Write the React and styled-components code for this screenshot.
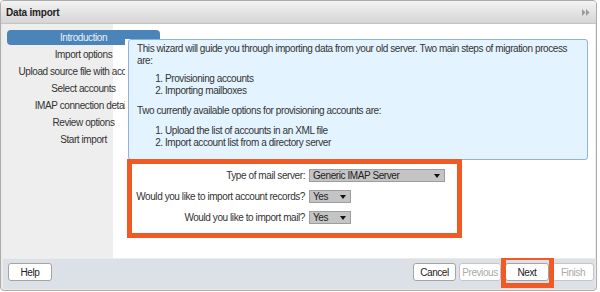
import React from "react";
import styled, { createGlobalStyle } from "styled-components";

const GlobalStyle = createGlobalStyle`
  *, *::before, *::after {
    box-sizing: border-box;
  }
  html, body {
    margin: 0;
    padding: 0;
    background: #ffffff;
    font-family: "Liberation Sans", Arial, sans-serif;
    font-size: 10px;
    letter-spacing: -0.42px;
    color: #333;
  }
`;

const Window = styled.div`
  width: 597px;
  height: 291px;
  border: 1px solid #acacac;
  border-radius: 4px;
  background: #ebebeb;
  display: flex;
  flex-direction: column;
  overflow: hidden;
`;

const TitleBar = styled.div`
  height: 23px;
  flex-shrink: 0;
  border-bottom: 1px solid #c4c4c4;
  background: linear-gradient(#f3f3f3, #d5d5d5);
  display: flex;
  align-items: center;
  justify-content: space-between;
  padding: 1px 6px 0 5px;
`;

const Title = styled.span`
  font-weight: bold;
  color: #222;
  letter-spacing: -0.2px;
`;

const Frame = styled.div`
  flex: 1;
  display: flex;
  flex-direction: column;
  padding: 0 1px 1px 2px;
`;

const Body = styled.div`
  height: 234px;
  flex-shrink: 0;
  display: flex;
  background: #fff;
`;

const Sidebar = styled.nav`
  width: 110px;
  flex-shrink: 0;
  background: #eeeeee;
  padding: 5px 0 0 4px;
`;

const StepItem = styled.div`
  width: 153px;
  height: 17px;
  display: flex;
  white-space: nowrap;
`;

const StepLabel = styled.div`
  flex: 1;
  margin: 1px 0;
  display: flex;
  align-items: center;
  justify-content: center;
  border-radius: 4px;
  background: ${(p) => (p.$active ? "#4a84b9" : "transparent")};
  color: ${(p) => (p.$active ? "#e9f0f7" : "#333")};
`;

const Content = styled.main`
  position: relative;
  z-index: 1;
  flex: 1;
  margin: 15px 0 0 12px;
  padding: 0 7px 0 3px;
  background: #fff;
`;

const InfoBox = styled.div`
  background: #e3f3ff;
  border: 1px solid #8db2e6;
  border-radius: 3px;
  padding: 3px 8px 10px 8px;
  line-height: 12px;
  color: #333;
`;

const Para = styled.p`
  margin: 0 0 ${(p) => p.$gap || 6}px;
`;

const List = styled.ol`
  margin: 0 0 ${(p) => p.$gap ?? 8}px;
  padding-left: 28px;
`;

const HighlightForm = styled.div`
  width: 335px;
  margin: -1px 0 0 -1px;
  border: 5px solid #f05a25;
  padding: 1px 0 5px 0;
`;

const FieldRow = styled.div`
  height: 21px;
  display: grid;
  grid-template-columns: 173px auto;
  column-gap: 4px;
  align-items: center;
`;

const FieldLabel = styled.label`
  text-align: right;
  white-space: nowrap;
  color: #333;
`;

const SelectBox = styled.div`
  width: ${(p) => p.$width}px;
  height: 13px;
  background: #c4c4c4;
  border: 1px solid #9d9d9d;
  display: flex;
  align-items: center;
  justify-content: space-between;
  padding: 0 4px 0 3px;
  color: #222;
  line-height: 11px;
`;

const Caret = styled.span`
  width: 0;
  height: 0;
  border-left: 3.5px solid transparent;
  border-right: 3.5px solid transparent;
  border-top: 4px solid #111;
`;

const Footer = styled.footer`
  height: 30px;
  flex-shrink: 0;
  margin-top: 1px;
  background: #dce0e7;
  display: flex;
  align-items: flex-start;
  justify-content: space-between;
  padding: 4px 1px 0 5px;
`;

const ButtonGroup = styled.div`
  display: flex;
  gap: 3px;
`;

const Button = styled.button`
  width: ${(p) => p.$width || 44}px;
  height: 18px;
  padding: 0;
  background: #fff;
  border: 1px solid ${(p) => (p.disabled ? "#c6c6c6" : "#a4a4a4")};
  border-radius: 3px;
  font-family: inherit;
  font-size: 10px;
  letter-spacing: inherit;
  color: ${(p) => (p.disabled ? "#aaaaaa" : "#222")};
`;

const Highlight = styled.div`
  position: relative;
  margin-left: 1px;

  &::after {
    content: "";
    position: absolute;
    left: -4px;
    right: -5px;
    top: -8px;
    bottom: -7px;
    border: 5px solid #f05a25;
    pointer-events: none;
  }
`;

const steps = [
  "Introduction",
  "Import options",
  "Upload source file with accounts",
  "Select accounts",
  "IMAP connection details",
  "Review options",
  "Start import",
];

function CollapseIcon() {
  return (
    <svg width="8" height="7" viewBox="0 0 8 7">
      <path d="M0 0 L3.5 3.5 L0 7 Z" fill="#9a9a9a" />
      <path d="M4 0 L7.5 3.5 L4 7 Z" fill="#9a9a9a" />
    </svg>
  );
}

function Select({ value, width }) {
  return (
    <SelectBox $width={width}>
      <span>{value}</span>
      <Caret />
    </SelectBox>
  );
}

export default function App() {
  return (
    <>
      <GlobalStyle />
      <Window>
        <TitleBar>
          <Title>Data import</Title>
          <CollapseIcon />
        </TitleBar>
        <Frame>
          <Body>
            <Sidebar>
              {steps.map((s, i) => (
                <StepItem key={s}>
                  <StepLabel $active={i === 0}>{s}</StepLabel>
                </StepItem>
              ))}
            </Sidebar>
            <Content>
              <InfoBox>
                <Para>
                  This wizard will guide you through importing data from your old
                  server. Two main steps of migration process are:
                </Para>
                <List>
                  <li>Provisioning accounts</li>
                  <li>Importing mailboxes</li>
                </List>
                <Para $gap={8}>
                  Two currently available options for provisioning accounts are:
                </Para>
                <List $gap={0}>
                  <li>Upload the list of accounts in an XML file</li>
                  <li>Import account list from a directory server</li>
                </List>
              </InfoBox>
              <HighlightForm>
                <FieldRow>
                  <FieldLabel>Type of mail server:</FieldLabel>
                  <Select value="Generic IMAP Server" width={136} />
                </FieldRow>
                <FieldRow>
                  <FieldLabel>Would you like to import account records?</FieldLabel>
                  <Select value="Yes" width={42} />
                </FieldRow>
                <FieldRow>
                  <FieldLabel>Would you like to import mail?</FieldLabel>
                  <Select value="Yes" width={42} />
                </FieldRow>
              </HighlightForm>
            </Content>
          </Body>
          <Footer>
            <Button>Help</Button>
            <ButtonGroup>
              <Button $width={43}>Cancel</Button>
              <Button $width={42} disabled>
                Previous
              </Button>
              <Highlight>
                <Button $width={44}>Next</Button>
              </Highlight>
              <Button $width={42} disabled>
                Finish
              </Button>
            </ButtonGroup>
          </Footer>
        </Frame>
      </Window>
    </>
  );
}
